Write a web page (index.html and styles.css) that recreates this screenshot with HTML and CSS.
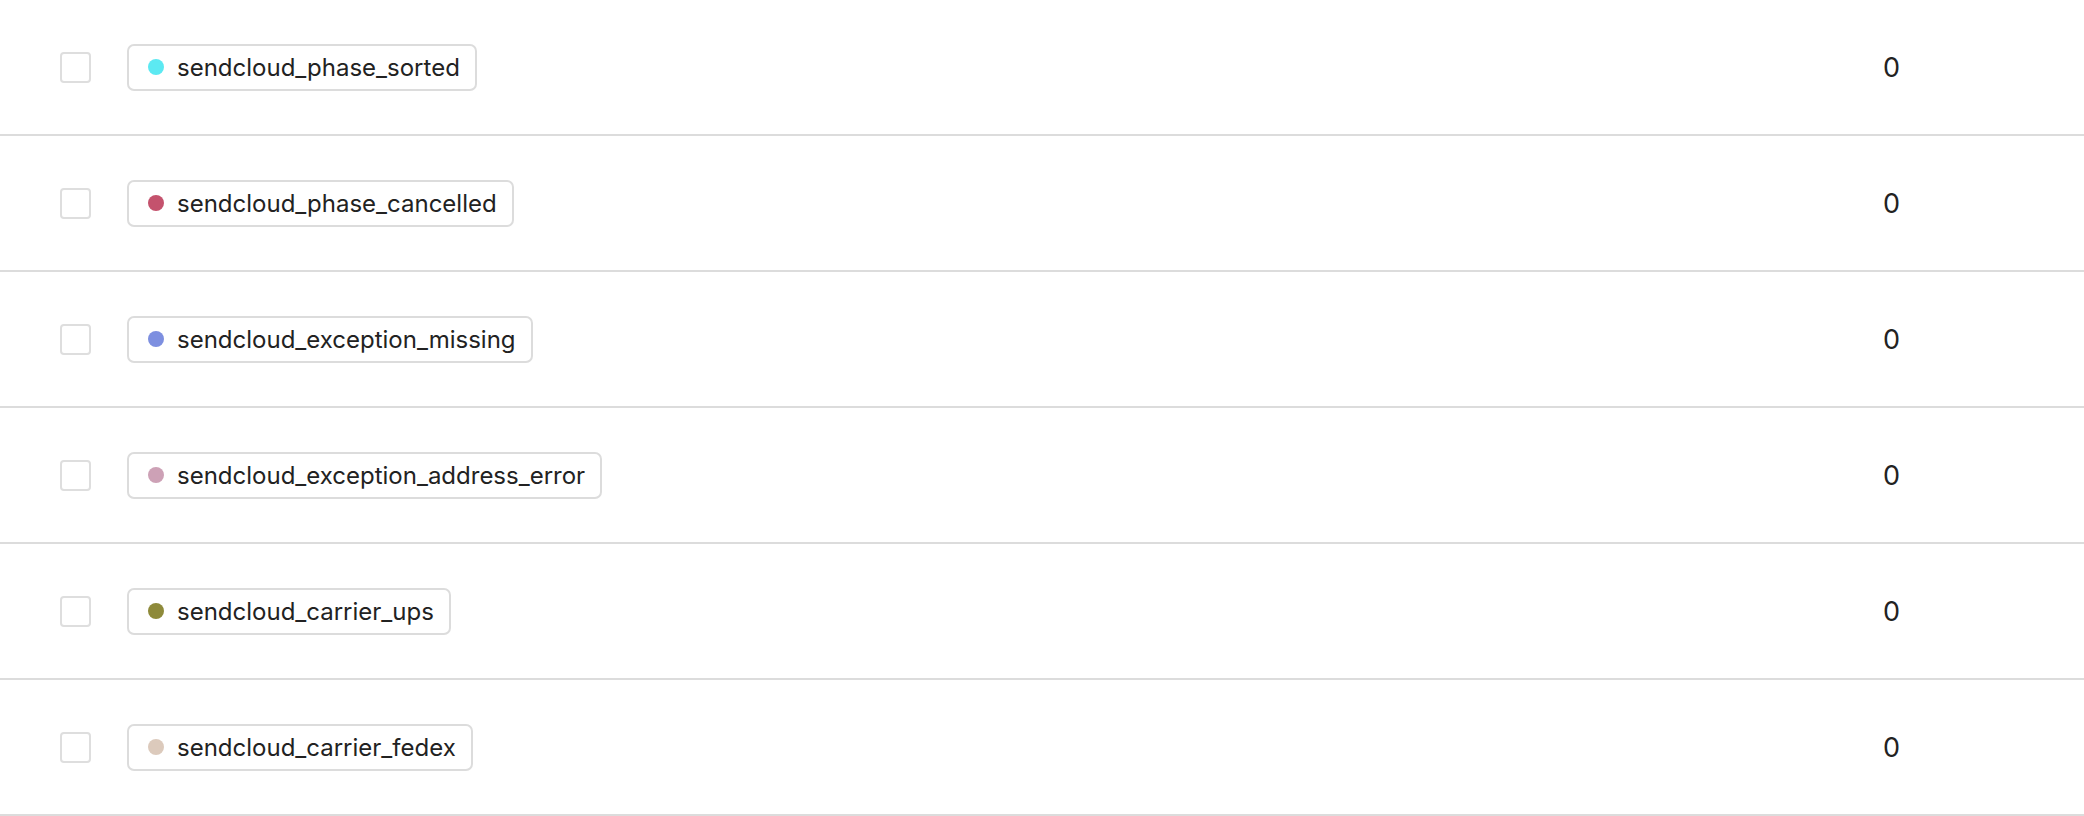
FILE: index.html
```html
<!DOCTYPE html>
<html lang="en">
<head>
    <meta charset="UTF-8">
    <meta name="viewport" content="width=device-width, initial-scale=1.0">
    <title>Labels</title>
    <link rel="stylesheet" href="styles.css">
</head>
<body>

    <ul class="label-list">
        <li class="label-row">
            <span class="check"></span>
            <div class="name-cell">
                <span class="tag"><span class="dot dot-sorted"></span>sendcloud_phase_sorted</span>
            </div>
            <div class="count">0</div>
        </li>
        <li class="label-row">
            <span class="check"></span>
            <div class="name-cell">
                <span class="tag"><span class="dot dot-cancelled"></span>sendcloud_phase_cancelled</span>
            </div>
            <div class="count">0</div>
        </li>
        <li class="label-row">
            <span class="check"></span>
            <div class="name-cell">
                <span class="tag"><span class="dot dot-missing"></span>sendcloud_exception_missing</span>
            </div>
            <div class="count">0</div>
        </li>
        <li class="label-row">
            <span class="check"></span>
            <div class="name-cell">
                <span class="tag"><span class="dot dot-address"></span>sendcloud_exception_address_error</span>
            </div>
            <div class="count">0</div>
        </li>
        <li class="label-row">
            <span class="check"></span>
            <div class="name-cell">
                <span class="tag"><span class="dot dot-ups"></span>sendcloud_carrier_ups</span>
            </div>
            <div class="count">0</div>
        </li>
        <li class="label-row">
            <span class="check"></span>
            <div class="name-cell">
                <span class="tag"><span class="dot dot-fedex"></span>sendcloud_carrier_fedex</span>
            </div>
            <div class="count">0</div>
        </li>
    </ul>

</body>
</html>
```

FILE: styles.css
```css
body {
    margin: 0;
    background-color: #fff;
    color: #222;
    font-family: Inter, 'Liberation Sans', sans-serif;
}
.label-list {
    list-style-type: none;
    margin: 0;
    padding: 0;
}
.label-row {
    display: flex;
    align-items: center;
    height: 134px;
    padding-left: 60px;
    border-bottom: 2px solid #dcdcdc;
}
.check {
    width: 27px;
    height: 27px;
    border: 2px solid #dedede;
    border-radius: 4px;
    flex: none;
}
.name-cell {
    flex: 1;
    margin-left: 36px;
}
.tag {
    display: inline-flex;
    align-items: center;
    height: 43px;
    padding: 0 15px 0 19px;
    border: 2px solid #dcdcdc;
    border-radius: 7px;
    font-size: 24px;
}
.dot {
    width: 16px;
    height: 16px;
    border-radius: 50%;
    margin-right: 13px;
}
.dot-sorted { background: #5ce9f2; }
.dot-cancelled { background: #c4526d; }
.dot-missing { background: #7d8fe0; }
.dot-address { background: #cda1b6; }
.dot-ups { background: #8e8a3a; }
.dot-fedex { background: #dccabc; }
.count {
    width: 201px;
    font-size: 27px;
}
```
